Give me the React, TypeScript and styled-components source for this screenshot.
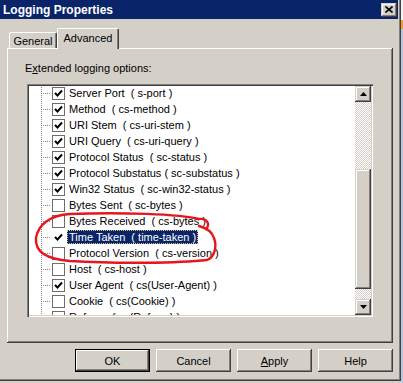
import styled, { createGlobalStyle } from "styled-components";

const COLORS = {
  FACE: "#d4d0c8",
  SHADOW: "#808080",
  DARK: "#404040",
  WHITE: "#ffffff",
  NAVY: "#0a246a",
};

const raised = `box-shadow: inset -1px -1px ${COLORS.DARK}, inset 1px 1px ${COLORS.FACE},
  inset -2px -2px ${COLORS.SHADOW}, inset 2px 2px ${COLORS.WHITE};`;

const GlobalStyle = createGlobalStyle`
  html, body {
    margin: 0;
    padding: 0;
  }
  body {
    background: ${COLORS.FACE};
    font-family: "Liberation Sans", Arial, sans-serif;
    font-size: 11px;
    color: #000;
  }
`;

interface Field {
  label: string;
  checked: boolean;
  selected?: boolean;
}

const FIELDS: Field[] = [
  { label: "Server Port  ( s-port )", checked: true },
  { label: "Method  ( cs-method )", checked: true },
  { label: "URI Stem  ( cs-uri-stem )", checked: true },
  { label: "URI Query  ( cs-uri-query )", checked: true },
  { label: "Protocol Status  ( sc-status )", checked: true },
  { label: "Protocol Substatus ( sc-substatus )", checked: true },
  { label: "Win32 Status  ( sc-win32-status )", checked: true },
  { label: "Bytes Sent  ( sc-bytes )", checked: false },
  { label: "Bytes Received  ( cs-bytes )", checked: false },
  { label: "Time Taken  ( time-taken )", checked: true, selected: true },
  { label: "Protocol Version  ( cs-version )", checked: false },
  { label: "Host  ( cs-host )", checked: false },
  { label: "User Agent  ( cs(User-Agent) )", checked: true },
  { label: "Cookie  ( cs(Cookie) )", checked: false },
  { label: "Referer  ( cs(Referer) )", checked: false },
];

const CheckMark = () => (
  <svg width="9" height="9" viewBox="0 0 9 9">
    <path d="M1 4 L3.5 6.5 L8 1.5" fill="none" stroke="#000" strokeWidth="2" />
  </svg>
);

const Arrow: React.FC<{ down?: boolean }> = ({ down }) => (
  <svg width="7" height="4" viewBox="0 0 7 4">
    <polygon points={down ? "0,0 7,0 3.5,4" : "0,4 7,4 3.5,0"} fill="#000" />
  </svg>
);

const App = () => (
  <Screen>
    <GlobalStyle />
    <Window>
      <TitleBar>
        <span>Logging Properties</span>
        <CloseButton>
          <svg width="8" height="7" viewBox="0 0 8 7">
            <path d="M0.5 0.5 L7.5 6.5 M7.5 0.5 L0.5 6.5" stroke="#000" strokeWidth="1.6" />
          </svg>
        </CloseButton>
      </TitleBar>

      <Body>
        <Tabs>
          <Tab $width={48}>General</Tab>
          <Tab $width={62} $active>
            Advanced
          </Tab>
        </Tabs>

        <Panel>
          <Caption>
            E<u>x</u>tended logging options:
          </Caption>
          <ListBox>
            <Items>
              {FIELDS.map((f) => (
                <Row key={f.label}>
                  <TreeLine />
                  <Check $faint={f.selected}>{f.checked && <CheckMark />}</Check>
                  <ItemText $selected={f.selected}>{f.label}</ItemText>
                </Row>
              ))}
            </Items>
            <ScrollBar>
              <ScrollButton>
                <Arrow />
              </ScrollButton>
              <Track $height={67} />
              <Thumb />
              <Track $height={10} />
              <ScrollButton>
                <Arrow down />
              </ScrollButton>
            </ScrollBar>
          </ListBox>
        </Panel>

        <Buttons>
          <Button $default>OK</Button>
          <Button>Cancel</Button>
          <Button>
            <u>A</u>pply
          </Button>
          <Button>Help</Button>
        </Buttons>
      </Body>

      <Annotation viewBox="0 0 403 383">
        <path
          d="M207 228 C210 223 206 218 199 219 C180 214 120 212 70 214 C50 215 38 225 36 238 C35 252 46 259 70 261 C120 264 180 263 207 260 C215 257 217 246 214 238 C212 231 206 228 199 226"
          fill="none"
          stroke="#e8161c"
          strokeWidth="2.4"
          strokeLinecap="round"
        />
      </Annotation>
    </Window>
    <Backdrop />
  </Screen>
);

const Screen = styled.div`
  display: flex;
  width: 403px;
  height: 383px;
  overflow: hidden;
`;

const Window = styled.div`
  position: relative;
  display: flex;
  flex-direction: column;
  width: 401px;
  height: 381px;
  flex-shrink: 0;
  background: ${COLORS.FACE};
  box-shadow: inset -1px -1px ${COLORS.DARK}, inset -2px -2px ${COLORS.SHADOW};
`;

const Backdrop = styled.div`
  width: 2px;
  height: 100%;
  background: linear-gradient(
    to bottom,
    #f4f4f4 0 20px,
    #f0a030 20px 29px,
    #b9c9e2 29px 100%
  );
`;

const TitleBar = styled.div`
  display: flex;
  align-items: center;
  justify-content: space-between;
  height: 19px;
  margin-right: 3px;
  padding-left: 3px;
  background: ${COLORS.NAVY};
  color: ${COLORS.WHITE};
  font-weight: 700;
  font-size: 12px;
`;

const CloseButton = styled.div`
  display: flex;
  align-items: center;
  justify-content: center;
  width: 16px;
  height: 14px;
  margin-right: 1px;
  background: ${COLORS.FACE};
  ${raised}
`;

const Body = styled.div`
  display: flex;
  flex-direction: column;
  padding: 9px 8px 0 7px;
`;

const Tabs = styled.div`
  display: flex;
  align-items: flex-end;
  height: 20px;
  padding-left: 2px;
  position: relative;
  z-index: 1;
`;

const Tab = styled.div<{ $width: number; $active?: boolean }>`
  display: flex;
  align-items: center;
  justify-content: center;
  box-sizing: border-box;
  width: ${(p) => p.$width}px;
  height: ${(p) => (p.$active ? 21 : 16)}px;
  margin-bottom: ${(p) => (p.$active ? -1 : 0)}px;
  padding-bottom: ${(p) => (p.$active ? 3 : 0)}px;
  background: ${COLORS.FACE};
  border-top: 1px solid ${COLORS.WHITE};
  border-left: 1px solid ${COLORS.WHITE};
  border-right: 1px solid ${COLORS.DARK};
  border-top-left-radius: 2px;
  border-top-right-radius: 2px;
  box-shadow: inset -1px 0 ${COLORS.SHADOW};
`;

const Panel = styled.div`
  display: flex;
  flex-direction: column;
  box-sizing: border-box;
  width: 386px;
  height: 295px;
  padding: 14px 20px 0;
  box-shadow: inset -1px -1px ${COLORS.DARK}, inset 1px 1px ${COLORS.WHITE},
    inset -2px -2px ${COLORS.SHADOW};
`;

const Caption = styled.div`
  height: 13px;
  line-height: 13px;
  margin-left: -2px;
  margin-bottom: 9px;
`;

const ListBox = styled.div`
  display: flex;
  box-sizing: border-box;
  width: 346px;
  height: 233px;
  padding: 2px;
  background: ${COLORS.WHITE};
  box-shadow: inset 1px 1px ${COLORS.SHADOW}, inset 2px 2px ${COLORS.DARK},
    inset -1px -1px ${COLORS.WHITE}, inset -2px -2px ${COLORS.FACE};
`;

const Items = styled.div`
  flex: 1;
  overflow: hidden;
  & > div:first-child {
    margin-top: -1px;
  }
`;

const Row = styled.div`
  display: flex;
  align-items: center;
  height: 16px;
`;

const TreeLine = styled.div`
  align-self: stretch;
  width: 23px;
  flex-shrink: 0;
  background-image: repeating-linear-gradient(
      to bottom,
      ${COLORS.SHADOW} 0 1px,
      transparent 1px 2px
    ),
    repeating-linear-gradient(
      to right,
      ${COLORS.SHADOW} 0 1px,
      transparent 1px 2px
    );
  background-size: 1px 100%, 10px 1px;
  background-position: 12px 0, 12px 8px;
  background-repeat: no-repeat;
`;

const Check = styled.div<{ $faint?: boolean }>`
  display: flex;
  align-items: center;
  justify-content: center;
  box-sizing: border-box;
  width: 13px;
  height: 13px;
  flex-shrink: 0;
  border: 1px solid ${(p) => (p.$faint ? COLORS.WHITE : "#6d6d6d")};
  background: ${COLORS.WHITE};
`;

const ItemText = styled.span<{ $selected?: boolean }>`
  margin-left: 2px;
  padding: 0 2px;
  height: 14px;
  line-height: 14px;
  box-sizing: border-box;
  white-space: pre;
  color: ${(p) => (p.$selected ? COLORS.WHITE : "#000")};
  background: ${(p) => (p.$selected ? COLORS.NAVY : "transparent")};
  outline: ${(p) => (p.$selected ? "1px dotted #d8c070" : "none")};
  outline-offset: -1px;
`;

const ScrollBar = styled.div`
  display: flex;
  flex-direction: column;
  width: 16px;
  flex-shrink: 0;
`;

const ScrollButton = styled.div`
  display: flex;
  align-items: center;
  justify-content: center;
  height: 16px;
  background: ${COLORS.FACE};
  ${raised}
`;

const Track = styled.div<{ $height: number }>`
  height: ${(p) => p.$height}px;
  background: repeating-conic-gradient(${COLORS.WHITE} 0 25%, ${COLORS.FACE} 0 50%) 0 0 / 2px 2px;
`;

const Thumb = styled.div`
  height: 120px;
  background: ${COLORS.FACE};
  ${raised}
`;

const Buttons = styled.div`
  display: flex;
  justify-content: flex-end;
  gap: 6px;
  margin-top: 6px;
`;

const Button = styled.button<{ $default?: boolean }>`
  width: 75px;
  height: 23px;
  padding: 0;
  border: none;
  font-family: inherit;
  font-size: 11px;
  color: #000;
  background: ${COLORS.FACE};
  box-shadow: ${(p) =>
    p.$default
      ? `inset 0 0 0 1px #000, inset -2px -2px ${COLORS.DARK}, inset 2px 2px ${COLORS.WHITE}, inset -3px -3px ${COLORS.SHADOW}`
      : `inset -1px -1px ${COLORS.DARK}, inset 1px 1px ${COLORS.WHITE}, inset -2px -2px ${COLORS.SHADOW}`};
`;

const Annotation = styled.svg`
  position: absolute;
  left: 0;
  top: 0;
  width: 403px;
  height: 383px;
  pointer-events: none;
`;

export default App;
